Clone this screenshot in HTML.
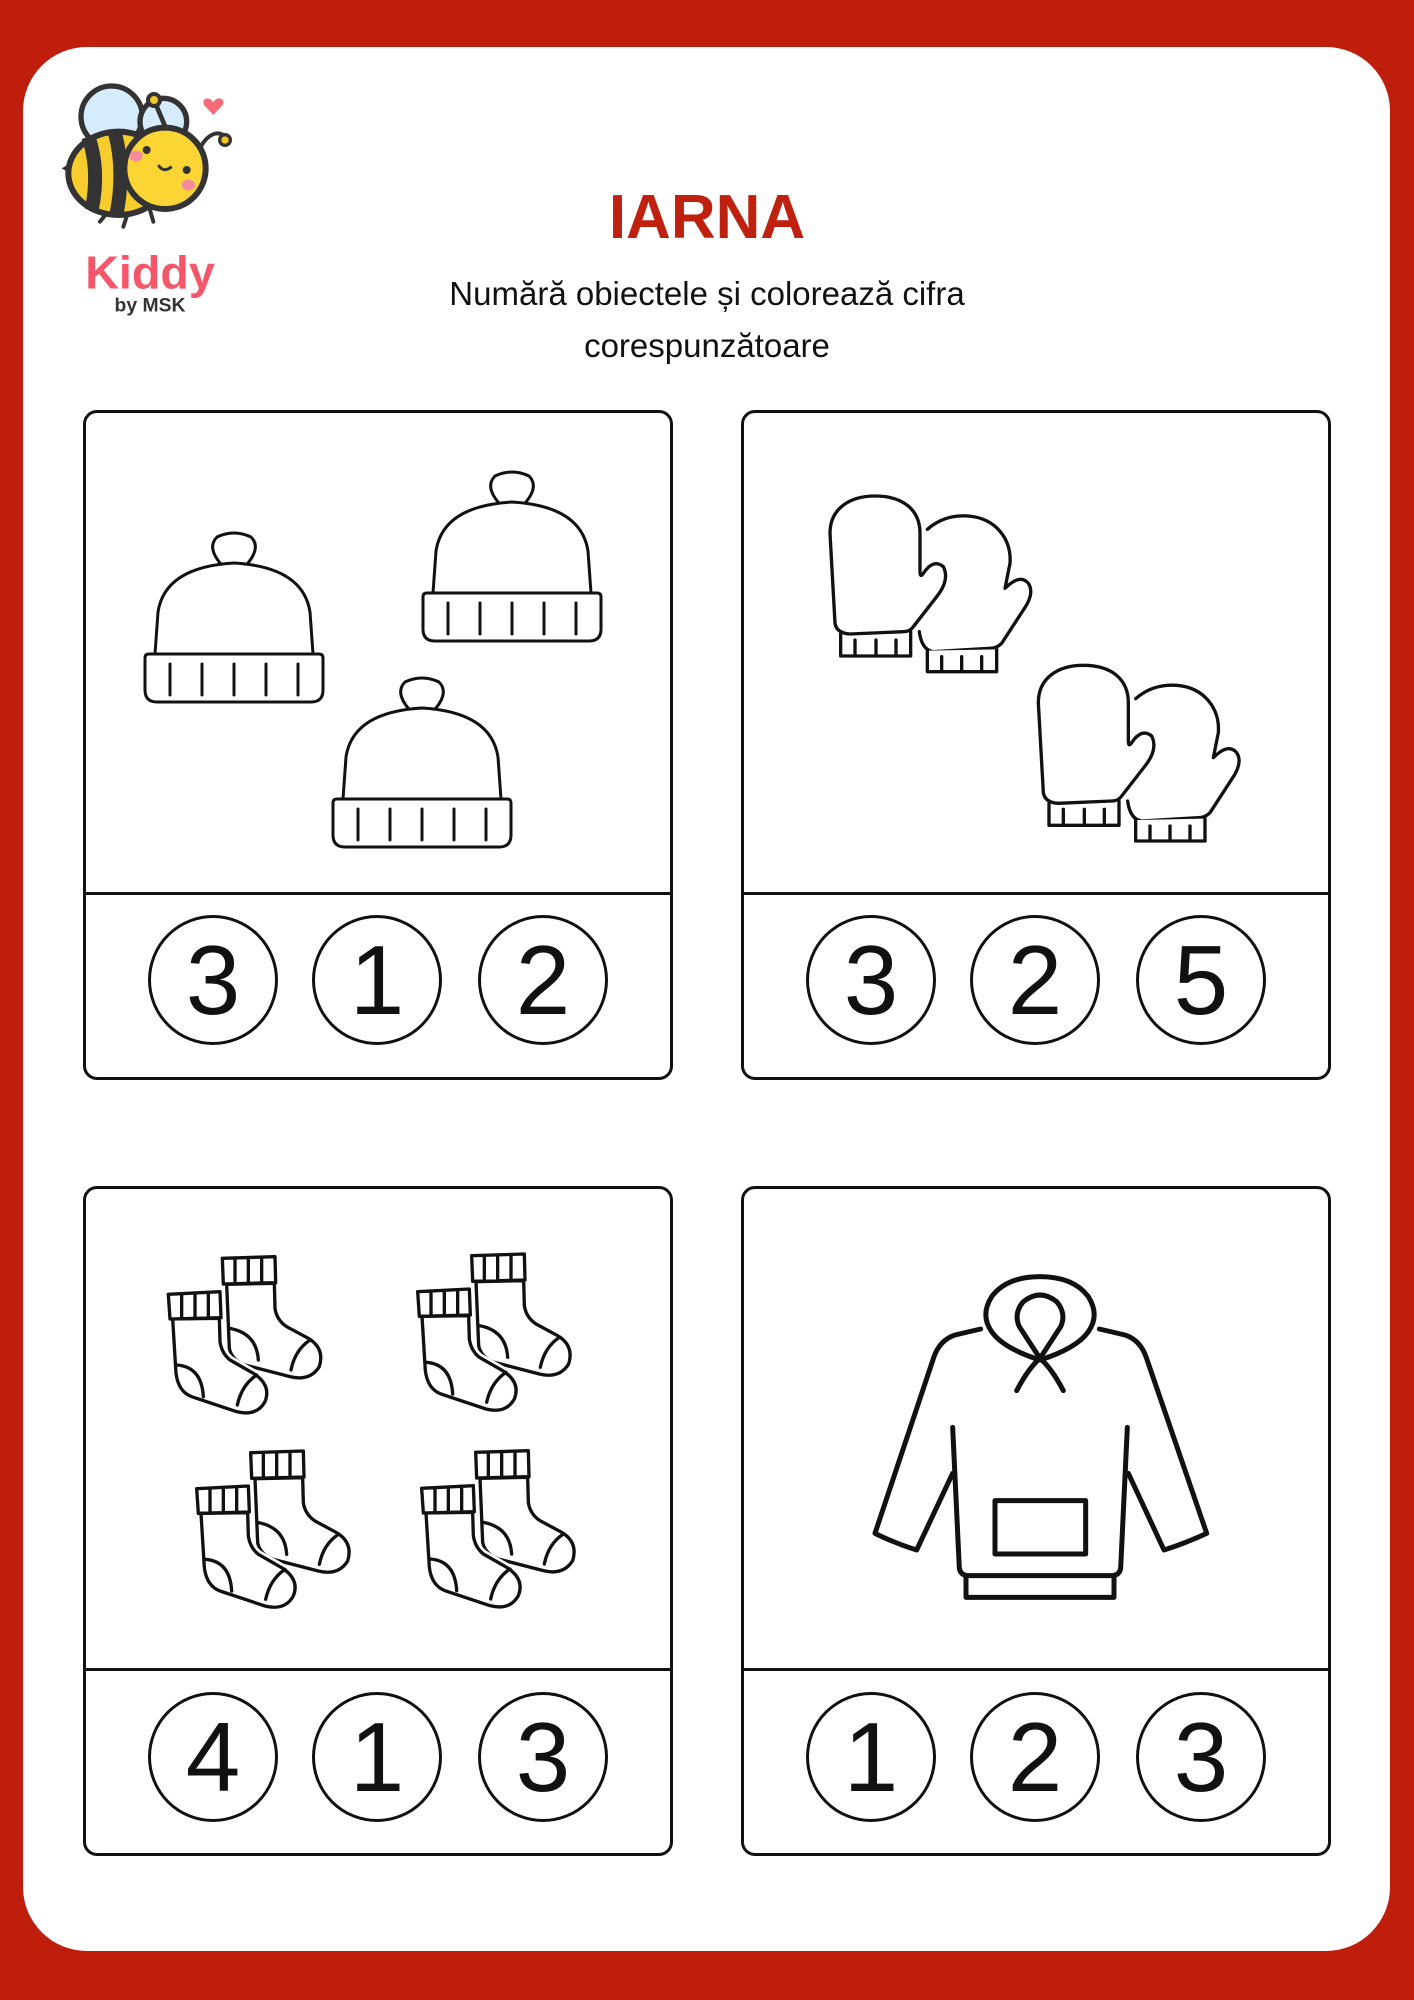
<!DOCTYPE html>
<html><head><meta charset="utf-8">
<style>
html,body{margin:0;padding:0}
body{width:1414px;height:2000px;background:#c01e0c;position:relative;overflow:hidden;font-family:"Liberation Sans",sans-serif}
.card{position:absolute;left:23px;top:47px;width:1367px;height:1904px;background:#fff;border-radius:64px}
.box{position:absolute;width:590px;height:670px;border:3px solid #111;border-radius:14px;box-sizing:border-box}
.div{position:absolute;left:0;right:0;height:3px;background:#111}
.c{position:absolute;width:130px;height:130px;border:3px solid #111;border-radius:50%;box-sizing:border-box;text-align:center;line-height:124px;font-size:98px;color:#111}
.t{position:absolute;left:0;width:1414px;text-align:center}
svg{position:absolute;overflow:visible}
</style></head><body>
<div class="card"></div>

<svg style="left:50px;top:70px" width="200" height="260" viewBox="0 0 600 780">
 <circle cx="185" cy="140" r="92" fill="#d4ecfb" stroke="#333" stroke-width="16"/>
 <circle cx="340" cy="155" r="70" fill="#d4ecfb" stroke="#333" stroke-width="16"/>
 <path d="M312 90 L350 180" stroke="#333" stroke-width="14" fill="none"/>
 <circle cx="312" cy="90" r="18" fill="#f5c522" stroke="#333" stroke-width="12"/>
 <path d="M35 295 L85 265 L85 325 Z" fill="#333"/>
 <ellipse cx="205" cy="310" rx="150" ry="125" fill="#f7cd2e" stroke="#333" stroke-width="18"/>
 <path d="M115 200 Q150 300 125 420" stroke="#333" stroke-width="42" fill="none"/>
 <path d="M195 190 Q225 300 200 430" stroke="#333" stroke-width="42" fill="none"/>
 <circle cx="345" cy="295" r="122" fill="#fbd533" stroke="#333" stroke-width="18"/>
 <path d="M450 235 Q470 195 500 190 Q525 190 525 210" stroke="#333" stroke-width="12" fill="none"/>
 <circle cx="525" cy="210" r="16" fill="#f5c522" stroke="#333" stroke-width="10"/>
 <circle cx="290" cy="240" r="12" fill="#333"/><circle cx="410" cy="300" r="12" fill="#333"/>
 <ellipse cx="258" cy="258" rx="20" ry="16" fill="#f58a9a"/><ellipse cx="415" cy="345" rx="20" ry="16" fill="#f58a9a"/>
 <path d="M325 285 Q340 310 365 290" stroke="#333" stroke-width="9" fill="none"/>
 <path d="M170 430 L150 455 M230 440 L220 470 M300 420 L310 455" stroke="#333" stroke-width="12" stroke-linecap="round"/>
 <path d="M490 135 L462 105 Q455 88 472 85 Q485 85 490 98 Q495 85 508 85 Q525 88 518 105 Z" fill="#f46b7a"/>
 <text x="300" y="655" text-anchor="middle" font-family="Liberation Sans" font-weight="bold" font-size="140" fill="#f5566a">Kiddy</text>
 <text x="300" y="725" text-anchor="middle" font-family="Liberation Sans" font-weight="bold" font-size="58" fill="#333">by MSK</text>
</svg>

<div class="t" style="top:182px;font-size:62px;font-weight:bold;color:#c0210f">IARNA</div>
<div class="t" style="top:268px;font-size:33px;color:#111;line-height:52px">Numără obiectele și colorează cifra<br>corespunzătoare</div>

<div class="box" style="left:83px;top:410px"><div class="div" style="top:479px"></div></div>
<div class="box" style="left:741px;top:410px"><div class="div" style="top:479px"></div></div>
<div class="box" style="left:83px;top:1186px"><div class="div" style="top:479px"></div></div>
<div class="box" style="left:741px;top:1186px"><div class="div" style="top:479px"></div></div>

<div class="c" style="left:148px;top:915px">3</div>
<div class="c" style="left:312px;top:915px">1</div>
<div class="c" style="left:478px;top:915px">2</div>
<div class="c" style="left:806px;top:915px">3</div>
<div class="c" style="left:970px;top:915px">2</div>
<div class="c" style="left:1136px;top:915px">5</div>
<div class="c" style="left:148px;top:1692px">4</div>
<div class="c" style="left:312px;top:1692px">1</div>
<div class="c" style="left:478px;top:1692px">3</div>
<div class="c" style="left:806px;top:1692px">1</div>
<div class="c" style="left:970px;top:1692px">2</div>
<div class="c" style="left:1136px;top:1692px">3</div>

<svg width="0" height="0" style="left:0;top:0">
 <defs>
  <g id="hat" fill="#fff" stroke="#111" stroke-width="3" stroke-linecap="round">
   <path d="M75 31 Q62 15 72 5 Q89 -3 106 5 Q116 15 103 31"/>
   <path d="M10 122 L13 80 Q20 35 89 31 Q158 35 165 80 L168 122"/>
   <path d="M0 126 Q0 122 4 122 L174 122 Q178 122 178 126 L178 158 Q178 170 166 170 L12 170 Q0 170 0 158 Z"/>
   <path d="M25 132 V163 M57 132 V163 M89 132 V163 M121 132 V163 M153 132 V163"/>
  </g>
 </defs>
</svg>
<svg style="left:145px;top:532px" width="178" height="170"><use href="#hat"/></svg>
<svg style="left:423px;top:471px" width="178" height="170"><use href="#hat"/></svg>
<svg style="left:333px;top:677px" width="178" height="170"><use href="#hat"/></svg>

<svg style="left:820px;top:490px" width="420" height="360" viewBox="0 0 1260 1080">
 <defs>
  <g id="mit" fill="#fff" stroke="#111" stroke-width="10" stroke-linecap="round" stroke-linejoin="round">
   <path d="M322 118 C360 85 400 75 445 78 C530 85 575 150 570 220 L555 295 Q600 250 625 280 Q645 310 610 360 L545 460 Q530 475 510 475 L340 485 Q305 480 298 425"/>
   <path d="M322 482 L322 545 L530 545 L530 478 M365 500 V545 M425 500 V545 M485 500 V545"/>
   <path d="M45 400 L30 130 C30 55 90 18 165 18 C250 18 300 60 300 130 L300 245 Q300 265 310 250 Q340 205 370 230 Q390 270 350 320 L280 410 Q270 425 250 425 L90 432 Q50 430 45 400 Z"/>
   <path d="M62 432 L62 498 L272 498 L272 425 M105 450 V498 M168 450 V498 M228 450 V498" fill="none"/>
  </g>
 </defs>
 <use href="#mit"/>
 <use href="#mit" transform="translate(625,508)"/>
</svg>

<svg style="left:160px;top:1245px" width="420" height="380" viewBox="0 0 1260 1140">
 <defs>
  <g id="sock" fill="#fff" stroke="#111" stroke-width="10" stroke-linecap="round" stroke-linejoin="round">
   <path d="M200 118 L208 310 Q215 345 255 360 L390 395 Q450 410 478 365 Q495 310 445 280 L380 245 Q350 225 345 190 L343 115 Z"/>
   <path d="M210 250 Q290 265 295 345 M450 285 Q405 315 393 375" fill="none"/>
   <path d="M187 40 L345 35 L347 113 L190 117 Z M225 40 V115 M265 38 V115 M305 37 V114"/>
   <path d="M38 222 L48 385 Q55 440 95 455 L230 500 Q290 515 315 470 Q335 420 280 385 L210 345 Q185 325 180 290 L178 220 Z" stroke="#fff" stroke-width="26"/>
   <path d="M38 222 L48 385 Q55 440 95 455 L230 500 Q290 515 315 470 Q335 420 280 385 L210 345 Q185 325 180 290 L178 220 Z"/>
   <path d="M50 360 Q125 365 130 455 M290 390 Q245 420 232 480" fill="none"/>
   <path d="M25 148 L180 140 L183 218 L30 222 Z M65 147 V220 M105 145 V220 M145 143 V219"/>
  </g>
 </defs>
 <use href="#sock"/>
 <use href="#sock" transform="translate(748,-8)"/>
 <use href="#sock" transform="translate(85,583)"/>
 <use href="#sock" transform="translate(760,582)"/>
</svg>

<svg style="left:860px;top:1260px" width="360" height="360" viewBox="0 0 1080 1080" fill="none" stroke="#111" stroke-width="15" stroke-linecap="round" stroke-linejoin="round">
 <path d="M540 300 Q430 265 395 215 Q360 165 395 110 Q440 50 540 50 Q640 50 685 110 Q720 165 685 215 Q650 265 540 300"/>
 <path d="M470 392 Q505 325 540 295 Q575 325 610 392"/>
 <path d="M540 295 L478 200 Q460 160 490 125 Q540 85 590 125 Q620 160 602 200 Z"/>
 <path d="M362 207 L285 225 Q240 240 222 290 L45 820 Q105 850 170 870 L278 640"/>
 <path d="M718 207 L795 225 Q840 240 858 290 L1040 820 Q975 850 912 870 L805 640"/>
 <path d="M278 502 L298 925 Q302 945 322 947 L758 947 Q778 945 782 925 L802 502"/>
 <path d="M318 950 V1012 H762 V950"/>
 <rect x="405" y="722" width="272" height="160"/>
</svg>
</body></html>
